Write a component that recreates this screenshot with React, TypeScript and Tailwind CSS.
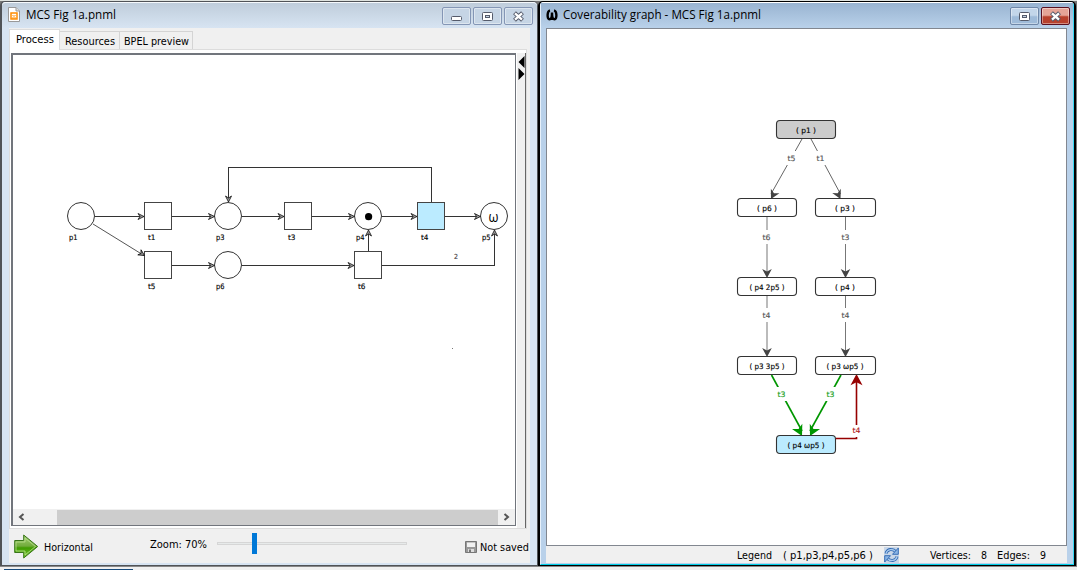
import React from 'react';

const UI = "font-['DejaVu_Sans_Condensed','DejaVu_Sans',sans-serif]";

function Label({ x, y, w, children, fill = '#000', size = 7.5 }: { x: number; y: number; w: number; children: string; fill?: string; size?: number }) {
  return (
    <text x={x} y={y} textLength={w} lengthAdjust="spacingAndGlyphs" fill={fill} stroke={fill} strokeWidth={0.15} fontSize={size} fontFamily="DejaVu Sans, sans-serif">
      {children}
    </text>
  );
}

function UiText({ w, children }: { w: number; children: string }) {
  return (
    <svg width={w} height={16} className="block shrink-0 overflow-visible">
      <text x={0} y={12} textLength={w} lengthAdjust="spacingAndGlyphs" fontSize={11} fill="#000" fontFamily="DejaVu Sans Condensed, DejaVu Sans, sans-serif">
        {children}
      </text>
    </svg>
  );
}

function TitleText({ w, children }: { w: number; children: string }) {
  return (
    <svg width={w} height={18} className="block shrink-0 overflow-visible">
      <text x={0} y={13} textLength={w} lengthAdjust="spacingAndGlyphs" fontSize={12} fill="#000" fontFamily="Open Sans, Noto Sans, sans-serif">
        {children}
      </text>
    </svg>
  );
}

function OpenArrow({ x, y, r = 0 }: { x: number; y: number; r?: number }) {
  return <path transform={`translate(${x} ${y}) rotate(${r})`} d="M-6 -3L0 0L-6 3L-4 0Z" fill="#999" stroke="#111" strokeWidth={0.8} />;
}

const places = [
  [81, 216, 'p1', 69, 240],
  [228, 216, 'p3', 216, 240],
  [368, 216, 'p4', 356, 240],
  [494, 216, 'p5', 482, 240],
  [228, 265, 'p6', 216, 289],
] as const;

const transitions = [
  [158, 216, 't1', 148, 240],
  [298, 216, 't3', 288, 240],
  [431, 216, 't4', 421, 240],
  [158, 265, 't5', 148, 289],
  [368, 265, 't6', 358, 289],
] as const;

function PetriNet() {
  return (
    <svg width={502} height={454} viewBox="13 55 502 454" className="block">
      <g stroke="#333" fill="none" shapeRendering="crispEdges">
        <path d="M95 216.5H144M172 216.5H214M242 216.5H284M312 216.5H354M382 216.5H417M445 216.5H480M172 265.5H214M242 265.5H354M368.500 251V231M431.500 202V167.500H228.500V202M382 265.500H494.500V231" />
      </g>
      <path d="M93 224L144 255.500" stroke="#555" fill="none" />
      {transitions.map(([x, y, name, lx, ly]) => (
        <g key={name}>
          <rect x={x - 13.5} y={y - 13.5} width={27} height={27} fill={name === 't4' ? '#bbebff' : '#fff'} stroke="#444" />
          <Label x={lx} y={ly} w={7.5}>{name}</Label>
        </g>
      ))}
      {places.map(([x, y, name, lx, ly]) => (
        <g key={name}>
          <circle cx={x} cy={y} r={13.5} fill="#fff" stroke="#333" />
          <Label x={lx} y={ly} w={8.5}>{name}</Label>
        </g>
      ))}
      <OpenArrow x={144} y={216.5} />
      <OpenArrow x={214.500} y={216.5} />
      <OpenArrow x={284} y={216.5} />
      <OpenArrow x={354.500} y={216.5} />
      <OpenArrow x={417} y={216.5} />
      <OpenArrow x={480.500} y={216.5} />
      <OpenArrow x={214.500} y={265.5} />
      <OpenArrow x={354} y={265.5} />
      <OpenArrow x={144.500} y={255.500} r={32} />
      <OpenArrow x={228.500} y={202} r={90} />
      <OpenArrow x={368.500} y={230} r={-90} />
      <OpenArrow x={494.500} y={230} r={-90} />
      <circle cx={368.600} cy={216.700} r={3.6} fill="#000" />
      <text x={488.500} y={221.500} textLength={10} lengthAdjust="spacingAndGlyphs" fontSize={14} fontFamily="Open Sans, Noto Sans, sans-serif">ω</text>
      <Label x={454} y={259} w={4} size={7} fill="#444">2</Label>
      <rect x={452} y={348} width={1} height={1} fill="#777" />
    </svg>
  );
}

const nodes = [
  [776, 121, '( p1 )', 20, '#ccc'],
  [737, 199, '( p6 )', 20, '#fff'],
  [815, 199, '( p3 )', 20, '#fff'],
  [737, 278, '( p4 2p5 )', 35, '#fff'],
  [815, 278, '( p4 )', 20, '#fff'],
  [737, 357, '( p3 3p5 )', 35, '#fff'],
  [815, 357, '( p3 ωp5 )', 37, '#fff'],
  [776, 436, '( p4 ωp5 )', 37, '#bbebff'],
] as const;

const edges = [
  [802, 139, 771, 199, '#666', 't5', 791.5, 158, 1],
  [811, 139, 840.500, 199, '#666', 't1', 820.5, 158, 1],
  [767, 217, 767, 278, '#aaa', 't6', 766.5, 237, 1.6],
  [845.5, 217, 845.5, 278, '#777', 't3', 845.5, 237, 1],
  [767, 296, 767, 357, '#aaa', 't4', 766.5, 315, 1.6],
  [845.5, 296, 845.5, 357, '#777', 't4', 845.5, 315, 1],
  [771.500, 375, 802, 436, '#009600', 't3', 781.5, 394, 1.6],
  [841, 375, 810, 436, '#009600', 't3', 830.5, 394, 1.6],
] as const;

function Head({ x, y, angle, fill, s = 1 }: { x: number; y: number; angle: number; fill: string; s?: number }) {
  return <path transform={`translate(${x} ${y}) rotate(${angle}) scale(${s})`} d="M0 0L-9 -4.800L-6.500 0L-9 4.800Z" fill={fill} />;
}

function CoverabilityGraph() {
  return (
    <svg width={519} height={516} viewBox="547 29 519 516" className="block">
      {edges.map(([x1, y1, x2, y2, c, t, lx, ly, w], i) => {
        const green = c === '#009600';
        const angle = (Math.atan2(y2 - y1, x2 - x1) * 180) / Math.PI;
        return (
          <g key={i}>
            <line x1={x1} y1={y1} x2={x2} y2={y2 - 5} stroke={c} strokeWidth={w} />
            <Head x={x2} y={y2} angle={angle} fill={green ? '#009600' : '#444'} s={green ? 1.2 : 1} />
            <rect x={lx - 6} y={ly - 7} width={12} height={14} fill="#fff" />
            <Label x={lx - 4} y={ly + 3} w={8} fill={green ? '#18a018' : '#555'}>{t}</Label>
          </g>
        );
      })}
      <path d="M836 438.500H856.500V380" fill="none" stroke="#960000" strokeWidth={1.6} />
      <Head x={856.500} y={374} angle={-90} fill="#960000" s={1.25} />
      <rect x={850} y={425} width={12} height={12} fill="#fff" />
      <Label x={852.500} y={433} w={8} fill="#b02020">t4</Label>
      {nodes.map(([x, y, t, w, fill]) => (
        <g key={t}>
          <rect x={x + 0.5} y={y - 0.5} width={x === 815 ? 60 : 59} height={18} rx={3.5} fill={fill} stroke="#333" strokeWidth={1.1} />
          <Label x={x + 30 - w / 2} y={y + 11.500} w={w}>{t}</Label>
        </g>
      ))}
    </svg>
  );
}

function WindowButton({ kind, active = false }: { kind: 'min' | 'max' | 'close'; active?: boolean }) {
  const red = active && kind === 'close';
  const tone = red
    ? 'border-[#5a1020] bg-linear-to-b from-[#e5a497] from-45% to-[#b8412d] to-55%'
    : active
      ? 'border-[#6f87a8] bg-linear-to-b from-[#c3d6ea] from-45% to-[#9fbbd9] to-55%'
      : 'border-[#8496b5] bg-[#c6d5e5]';
  return (
    <div className={`flex h-[18px] w-[29px] items-center justify-center rounded-[2px] border shadow-[inset_0_0_0_1px_rgba(255,255,255,0.4)] ${tone}`}>
      <svg width={13} height={11} viewBox="0 0 13 11" className="block">
        {kind === 'min' && <rect x={1.500} y={5.500} width={10} height={4} rx={1} fill="#fff" stroke="#555b6b" />}
        {kind === 'max' && (
          <>
            <rect x={1.500} y={1.500} width={10} height={8} rx={1} fill="#fff" stroke="#555b6b" />
            <rect x={4.500} y={4.500} width={4} height={2} fill="#c6d5e5" stroke="#555b6b" />
          </>
        )}
        {kind === 'close' && (
          <>
            <path d="M2.500 1.800L10.500 9.200M10.500 1.800L2.500 9.200" stroke="#555b6b" strokeWidth={4.200} />
            <path d="M3 2.300L10 8.700M10 2.300L3 8.700" stroke="#fff" strokeWidth={2.300} />
          </>
        )}
      </svg>
    </div>
  );
}

function FileIcon() {
  return (
    <svg width={12} height={16} viewBox="0 0 12 16" className="block shrink-0">
      <path d="M.5 .5H8L11.500 4V14.500H.5Z" fill="#fff" stroke="#999" />
      <path d="M8 .5V4H11.500" fill="#ddd" stroke="#999" />
      <path d="M3 6H9V12H3Z" fill="#fff" stroke="#ff8c00" strokeWidth={1.500} />
      <path d="M4.500 8L6 9.500L7.500 8M4 11H8" fill="none" stroke="#ff8c00" />
    </svg>
  );
}

function GreenArrow() {
  return (
    <svg width={25} height={25} viewBox="0 0 25 25" className="block shrink-0">
      <defs>
        <linearGradient id="arrow" x1="0" y1="0" x2="0" y2="1">
          <stop offset="0" stopColor="#a4cf75" />
          <stop offset=".48" stopColor="#72ac3c" />
          <stop offset=".56" stopColor="#3f9c00" />
          <stop offset="1" stopColor="#80ca35" />
        </linearGradient>
      </defs>
      <path d="M.7 6.500H9.700V1L23.700 12.500L9.700 24V18.500H.7Z" fill="url(#arrow)" stroke="#39751a" />
      <path d="M2 8H11V4L21.500 12.500L11 21V17H2Z" fill="none" stroke="#b9df90" strokeOpacity=".8" />
    </svg>
  );
}

function RefreshIcon() {
  return (
    <svg width={15} height={16} viewBox="0 0 15 16" className="block shrink-0">
      <rect width={15} height={16} fill="#c9d7e8" />
      <path d="M2 6.500C3 2 9 1 12 5M13 9.500C12 14 6 15 3 11" fill="none" stroke="#2e67b1" strokeWidth={3} />
      <path d="M2 6.500C3 2 9 1 12 5M13 9.500C12 14 6 15 3 11" fill="none" stroke="#a9caee" strokeWidth={1.300} />
      <path d="M14.300 1V7.300H8.500ZM.7 15V8.700H6.500Z" fill="#8bb5e5" stroke="#2e67b1" strokeWidth={0.900} />
    </svg>
  );
}

function SaveIcon() {
  return (
    <svg width={12} height={12} viewBox="0 0 12 12" className="block shrink-0">
      <path d="M.5 .5H11.500V11.500H.5Z" fill="#999" stroke="#777" />
      <path d="M2 1.500H10V6H2Z" fill="#f1f1f1" />
      <path d="M3 8H9V11H3Z" fill="#ddd" />
      <path d="M4 8.500H6V11H4Z" fill="#777" />
    </svg>
  );
}

function OmegaIcon() {
  return (
    <svg width={12} height={12} viewBox="0 0 12 12" className="block shrink-0">
      <path d="M4 1.300C1 2 .8 10.300 3.500 10.300C5.700 10.300 6 8 6 3.500C6 8 6.300 10.300 8.500 10.300C11.200 10.300 11 2 8 1.300" fill="none" stroke="#000" strokeWidth={2.400} />
    </svg>
  );
}

function Chevron({ d }: { d: string }) {
  return (
    <svg width={7} height={8} viewBox="0 0 7 8" className="block">
      <path d={d} fill="none" stroke="#555" strokeWidth={2} />
    </svg>
  );
}

function ProcessWindow() {
  return (
    <section className="flex h-[565px] w-[538px] shrink-0 flex-col rounded-t-[5px] border border-l-2 border-[#505357] bg-[#d7e4f2]">
      <header className="flex h-[26px] shrink-0 items-center rounded-t-[4px] border-t border-[#f5f9fc] bg-linear-to-b from-[#bfcddb] to-[#d7e4f2] pr-[4px] pb-[2px] pl-[6px]">
        <FileIcon />
        <div className="ml-[6px] pt-px"><TitleText w={90}>MCS Fig 1a.pnml</TitleText></div>
        <div className="ml-auto flex gap-[2px] pt-[3px]">
          <WindowButton kind="min" />
          <WindowButton kind="max" />
          <WindowButton kind="close" />
        </div>
      </header>
      <div className="mr-[7px] ml-[7px] flex h-[535px] flex-col bg-[#f0f0f0]">
        <nav className="flex h-[21px] shrink-0 items-end">
          <div className="z-10 -mb-px flex h-[21px] w-[51px] justify-center border border-b-0 border-[#dcdcdc] bg-white pt-[1px]"><UiText w={38}>Process</UiText></div>
          <div className="flex h-[18px] w-[60px] justify-center border-t border-r border-[#d4d4d4] pt-[1px]"><UiText w={50}>Resources</UiText></div>
          <div className="flex h-[18px] w-[73px] justify-center border-t border-r border-[#d4d4d4] pt-[1px]"><UiText w={65}>BPEL preview</UiText></div>
        </nav>
        <div className="flex h-[480px] w-[518px] shrink-0 border border-[#dcdcdc] bg-white pt-[3px] pl-px">
          <div className="flex h-[473px] w-[505px] shrink-0 flex-col border-t-2 border-r border-b border-l-2 border-[#71757c]">
            <PetriNet />
            <div className="flex h-4 items-center bg-[#f0f0f0]">
              <div className="flex w-[44px] pl-[5px]"><Chevron d="M5.500 1L2 4L5.500 7" /></div>
              <div className="h-[15px] w-[441px] bg-[#cdcdcd]" />
              <div className="flex flex-1 justify-center"><Chevron d="M1.500 1L5 4L1.500 7" /></div>
            </div>
          </div>
          <div className="ml-[1px] flex w-[9px] shrink-0 flex-col items-center border-r border-[#666] bg-[#f0f0f0] pt-[3px]">
            <svg width={7} height={25} viewBox="0 0 7 25" className="block"><path d="M6.500 0V12L.5 6ZM.5 12V24L6.500 18Z" fill="#000" /></svg>
          </div>
        </div>
        <footer className="flex h-[33px] items-center pl-[5px]">
          <div className="pt-[2px]"><GreenArrow /></div>
          <div className="mt-[3px] ml-[5px]"><UiText w={49}>Horizontal</UiText></div>
          <div className="-mt-[3px] ml-[57px]"><UiText w={57}>Zoom: 70%</UiText></div>
          <div className="-mt-[4px] ml-[10px] flex h-[21px] w-[190px] items-center">
            <div className="h-[3px] w-[35px] border border-r-0 border-[#d6d6d6] bg-[#e7eaea]" />
            <div className="h-[21px] w-[5px] bg-[#0078d7]" />
            <div className="h-[3px] flex-1 border border-l-0 border-[#d6d6d6] bg-[#e7eaea]" />
          </div>
          <div className="mt-[3px] ml-[58px] flex items-center gap-[3px]"><SaveIcon /><UiText w={49}>Not saved</UiText></div>
        </footer>
      </div>
    </section>
  );
}

function GraphWindow() {
  return (
    <section className="flex h-[565px] w-[538px] shrink-0 flex-col rounded-t-[5px] border-x-2 border-y border-black bg-[#b9d1ea]">
      <div className="flex min-h-0 flex-1 flex-col rounded-t-[4px] border border-t-white border-r-[#35d8f4] border-b-[#00cfe8] border-l-[#e7f1fb]">
        <header className="flex h-[25px] shrink-0 items-center bg-linear-to-b from-[#99b4d1] to-[#b9d1ea] pr-[3px] pb-[2px] pl-[5px]">
          <OmegaIcon />
          <div className="ml-[5px] pt-px"><TitleText w={198}>Coverability graph - MCS Fig 1a.pnml</TitleText></div>
          <div className="ml-auto flex gap-[2px] pt-[3px]">
            <WindowButton kind="max" active />
            <WindowButton kind="close" active />
          </div>
        </header>
        <div className="ml-[5px] flex w-[521px] flex-col bg-[#f0f0f0]">
          <div className="border border-[#828790] bg-white"><CoverabilityGraph /></div>
          <footer className="flex h-[17px] items-center pl-[191px]">
            <UiText w={35}>Legend</UiText>
            <div className="ml-[11px]"><UiText w={90}>( p1,p3,p4,p5,p6 )</UiText></div>
            <div className="ml-[11px]"><RefreshIcon /></div>
            <div className="ml-[31px]"><UiText w={41}>Vertices:</UiText></div>
            <div className="ml-[10px]"><UiText w={6}>8</UiText></div>
            <div className="ml-[10px]"><UiText w={33}>Edges:</UiText></div>
            <div className="ml-[10px]"><UiText w={6}>9</UiText></div>
          </footer>
        </div>
      </div>
    </section>
  );
}

export default function App() {
  return (
    <main className={`h-[570px] w-[1077px] overflow-hidden border-t border-[#dfe3df] bg-[#777] ${UI}`}>
      <div className="flex h-[565px]">
        <ProcessWindow />
        <GraphWindow />
      </div>
      <div className="h-[4px] border-t border-[#888] bg-[#f0f0f0] pt-[2px] pl-[4px]">
        <div className="h-px w-[129px] bg-[#174a7c]" />
      </div>
    </main>
  );
}
